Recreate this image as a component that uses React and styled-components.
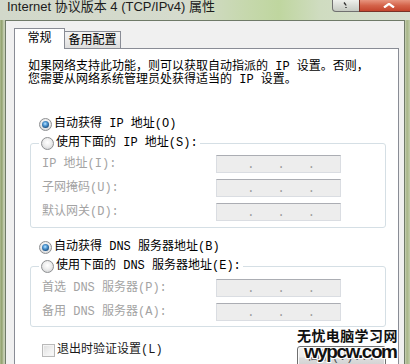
import React from 'react';
import styled, { createGlobalStyle } from 'styled-components';

const UI_FONT = `"Liberation Mono", "Noto Sans CJK SC", monospace`;

const GlobalStyle = createGlobalStyle`
  html, body {
    margin: 0;
    padding: 0;
  }
  body {
    width: 410px;
    height: 364px;
    overflow: hidden;
    background: #c4cfb0;
  }
`;

const Window = styled.div`
  position: relative;
  width: 410px;
  height: 364px;
  overflow: hidden;
  display: flex;
  flex-direction: column;
  background: linear-gradient(
    to right,
    #aebb91 0px,
    #8c9c68 2px,
    #b9c4a2 3px,
    #c8d0b6 5px,
    #c8d0b6 405px,
    #a6b587 407px,
    #c2cdac 410px
  );
`;

const TitleBar = styled.div`
  height: 20px;
  flex-shrink: 0;
  display: flex;
  align-items: flex-start;
  background: linear-gradient(
    to right,
    #d2d8ca 0%,
    #d5dbcd 45%,
    #c6d8ad 60%,
    #bfd69f 68%,
    #cfdcc0 78%,
    #d9ded2 100%
  );
`;

const Title = styled.div`
  padding-left: 7px;
  font-family: "Liberation Sans", "Noto Sans CJK SC", sans-serif;
  font-size: 13px;
  line-height: 13px;
  color: #1c1c1c;
  white-space: nowrap;
`;

const Caption = styled.div`
  margin-left: auto;
  display: flex;
  height: 12px;
  margin-right: -8px;
`;

const CaptionButton = styled.div`
  height: 12px;
  box-sizing: border-box;
  border: 1px solid ${(p) => (p.$close ? '#7a3227' : '#707070')};
  border-top: none;
  display: flex;
  align-items: flex-end;
  justify-content: center;
  width: ${(p) => (p.$close ? '59px' : '28px')};
  margin-left: ${(p) => (p.$close ? '-1px' : '0')};
  border-radius: ${(p) => (p.$close ? '0 0 4px 0' : '0 0 0 4px')};
  background: ${(p) =>
    p.$close
      ? 'linear-gradient(to bottom, #e7957f 0%, #d4634a 50%, #c4452d 100%)'
      : 'linear-gradient(to bottom, #eef0ec 0%, #d9dcd6 50%, #c6cac2 100%)'};
  svg {
    display: block;
    margin-bottom: 3px;
  }
`;

const Body = styled.div`
  flex: 1;
  margin: 0 5px;
  min-height: 0;
  background: #f0f0f0;
  border: 1px solid #6f7a68;
  border-bottom: none;
  padding: 7px 5px 0 8px;
  display: flex;
  flex-direction: column;
`;

const TabRow = styled.div`
  display: flex;
  align-items: flex-end;
  margin-bottom: -1px;
  position: relative;
  z-index: 1;
`;

const Tab = styled.div`
  box-sizing: border-box;
  border: 1px solid #898c95;
  font-family: ${UI_FONT};
  font-size: 12px;
  color: #000;
  display: flex;
  justify-content: center;
  ${(p) =>
    p.$active
      ? `
    width: 51px;
    height: 21px;
    border-bottom: none;
    background: #fff;
    padding-top: 3px;
    line-height: 14px;
    position: relative;
    z-index: 2;
  `
      : `
    width: 57px;
    height: 18px;
    margin-left: -1px;
    background: linear-gradient(to bottom, #f3f3f3 0%, #ebebeb 50%, #dddddd 100%);
    padding-top: 2px;
    line-height: 14px;
  `}
`;

const Panel = styled.div`
  flex: 1;
  background: #fff;
  border: 1px solid #898c95;
  border-bottom: none;
  padding: 12px 12px 0 13px;
  font-family: ${UI_FONT};
  font-size: 12px;
  color: #000;
`;

const Description = styled.p`
  margin: 0;
  line-height: 13px;
  white-space: nowrap;
`;

const OptionRow = styled.div`
  display: flex;
  align-items: center;
  gap: 2px;
  height: 19px;
  line-height: 19px;
  padding-left: ${(p) => (p.$inset ? '11px' : '0')};
  margin-top: ${(p) => p.$top || 0}px;
  white-space: nowrap;
`;

const Radio = styled.span`
  width: 13px;
  height: 13px;
  box-sizing: border-box;
  border-radius: 50%;
  border: 1px solid #8e9092;
  background: radial-gradient(circle at 50% 40%, #ffffff 0%, #eeeeee 45%, #c9cbcd 100%);
  display: flex;
  align-items: center;
  justify-content: center;
  flex-shrink: 0;

  &::after {
    content: '';
    width: 7px;
    height: 7px;
    border-radius: 50%;
    background: ${(p) =>
      p.$checked
        ? 'radial-gradient(circle at 45% 40%, #c2e6ff 0%, #5aa2dc 30%, #1d5488 70%, #0f3150 100%)'
        : 'transparent'};
  }
`;

const Group = styled.fieldset`
  margin: ${(p) => p.$top || 0}px 0 0 2px;
  padding: ${(p) => p.$padTop}px 6px ${(p) => p.$padBottom}px 6px;
  border: 1px solid #d5dfe5;
  border-radius: 3px;
  min-width: 0;
`;

const Legend = styled.legend`
  margin-left: 2px;
  padding: 0 2px;
`;

const FieldGrid = styled.div`
  display: grid;
  grid-template-columns: 179px 125px;
  row-gap: 6px;
`;

const FieldLabel = styled.div`
  padding-left: 5px;
  height: 18px;
  line-height: 18px;
  color: #a3a3a3;
  white-space: nowrap;
`;

const IpBox = styled.div`
  height: 18px;
  box-sizing: border-box;
  border: 1px solid #dadde2;
  border-top-color: #abadb3;
  background: #ededed;
  display: flex;
  align-items: center;
  padding: 0 2px 0 3px;
  color: #9c9c9c;
`;

const IpSegment = styled.span`
  flex: 1;
`;

const IpDot = styled.span`
  width: 3px;
  line-height: 16px;
  font-size: 12px;
  transform: translateY(1px);
`;

const BottomRow = styled.div`
  margin-top: 17px;
  display: flex;
  align-items: flex-start;
  justify-content: space-between;
`;

const CheckLabel = styled.label`
  display: flex;
  align-items: center;
  gap: 2px;
  height: 13px;
  margin-left: 14px;
  line-height: 13px;
  color: #1a1a1a;
  white-space: nowrap;
`;

const Checkbox = styled.span`
  width: 13px;
  height: 13px;
  box-sizing: border-box;
  border: 1px solid #b9b9b9;
  background: linear-gradient(135deg, #dcdcdc 0%, #f2f2f2 60%, #fbfbfb 100%);
  box-shadow: inset 0 0 0 1px #f4f4f4;
  flex-shrink: 0;
`;

const Button = styled.div`
  margin-top: 2px;
  width: 89px;
  height: 23px;
  box-sizing: border-box;
  border: 1px solid #707070;
  border-radius: 3px;
  background: linear-gradient(to bottom, #f3f3f3 0%, #ebebeb 48%, #dddddd 52%, #cfcfcf 100%);
  box-shadow: inset 0 0 0 1px #fbfbfb;
  text-align: center;
  line-height: 21px;
  color: #555;
`;

const Watermark = styled.div`
  position: absolute;
  left: 297px;
  top: 328px;
  z-index: 5;
  display: flex;
  flex-direction: column;
  color: #111;
  text-shadow: 0 0 2px #fff, 1px 1px 0 #fff, -1px -1px 0 #fff, 1px -1px 0 #fff, -1px 1px 0 #fff;
  pointer-events: none;
`;

const MarkName = styled.span`
  font-family: "Noto Sans CJK SC", sans-serif;
  font-weight: 700;
  font-size: 14px;
  letter-spacing: 0.4px;
  line-height: 15px;
`;

const MarkUrl = styled.span`
  margin-left: 7px;
  font-family: "Liberation Sans", Arial, sans-serif;
  font-weight: 700;
  font-size: 19px;
  letter-spacing: -1.5px;
  line-height: 17px;
`;

function IpField() {
  return (
    <IpBox>
      <IpSegment />
      <IpDot>.</IpDot>
      <IpSegment />
      <IpDot>.</IpDot>
      <IpSegment />
      <IpDot>.</IpDot>
      <IpSegment />
    </IpBox>
  );
}

export default function App() {
  return (
    <>
      <GlobalStyle />
      <Window>
        <TitleBar>
          <Title>Internet 协议版本 4 (TCP/IPv4) 属性</Title>
          <Caption>
            <CaptionButton>
              <svg width="6" height="6" viewBox="0 0 6 6">
                <path d="M1 0.5 Q3 3 3 3.5 M3 5 v1" stroke="#333" strokeWidth="1.4" fill="none" />
              </svg>
            </CaptionButton>
            <CaptionButton $close>
              <svg width="12" height="5" viewBox="0 0 12 5">
                <polyline points="1,4.5 6,0.8 11,4.5" stroke="#fff" strokeWidth="2.2" fill="none" />
              </svg>
            </CaptionButton>
          </Caption>
        </TitleBar>
        <Body>
          <TabRow>
            <Tab $active>常规</Tab>
            <Tab>备用配置</Tab>
          </TabRow>
          <Panel>
            <Description>
              如果网络支持此功能，则可以获取自动指派的 IP 设置。否则，
              <br />
              您需要从网络系统管理员处获得适当的 IP 设置。
            </Description>

            <OptionRow $inset $top={28}>
              <Radio $checked />
              自动获得 IP 地址(O)
            </OptionRow>
            <Group $padTop={2} $padBottom={6}>
              <Legend>
                <OptionRow>
                  <Radio />
                  使用下面的 IP 地址(S):
                </OptionRow>
              </Legend>
              <FieldGrid>
                <FieldLabel>IP 地址(I):</FieldLabel>
                <IpField />
                <FieldLabel>子网掩码(U):</FieldLabel>
                <IpField />
                <FieldLabel>默认网关(D):</FieldLabel>
                <IpField />
              </FieldGrid>
            </Group>

            <OptionRow $inset $top={10}>
              <Radio $checked />
              自动获得 DNS 服务器地址(B)
            </OptionRow>
            <Group $padTop={3} $padBottom={5}>
              <Legend>
                <OptionRow>
                  <Radio />
                  使用下面的 DNS 服务器地址(E):
                </OptionRow>
              </Legend>
              <FieldGrid>
                <FieldLabel>首选 DNS 服务器(P):</FieldLabel>
                <IpField />
                <FieldLabel>备用 DNS 服务器(A):</FieldLabel>
                <IpField />
              </FieldGrid>
            </Group>

            <BottomRow>
              <CheckLabel>
                <Checkbox />
                退出时验证设置(L)
              </CheckLabel>
              <Button>高级(V)...</Button>
            </BottomRow>
          </Panel>
        </Body>
        <Watermark>
          <MarkName>无忧电脑学习网</MarkName>
          <MarkUrl>wypcw.com</MarkUrl>
        </Watermark>
      </Window>
    </>
  );
}
